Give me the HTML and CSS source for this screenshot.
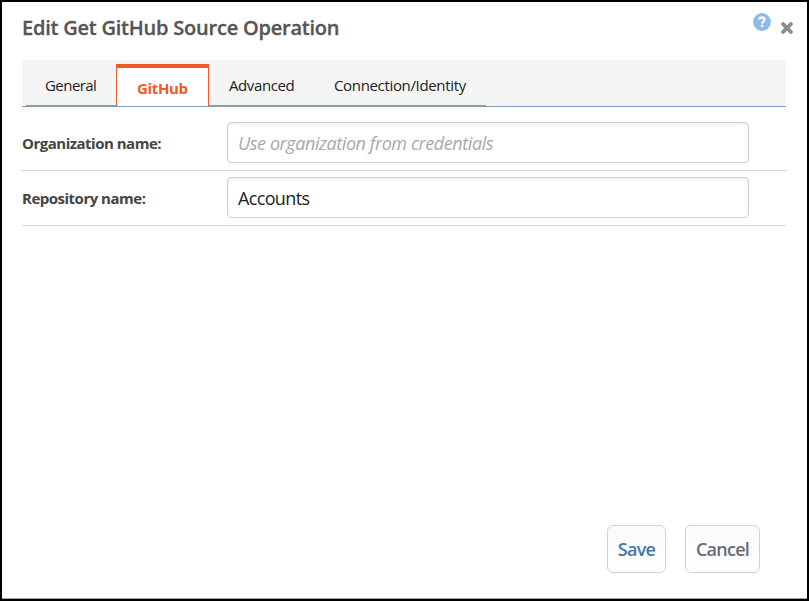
FILE: index.html
```html
<!DOCTYPE html>
<html lang="en">
<head>
<meta charset="utf-8">
<title>Edit Get GitHub Source Operation</title>
<link rel="stylesheet" href="styles.css">
</head>
<body>
<main class="dialog">
  <header class="header">
    <h1 class="title">Edit Get GitHub Source Operation</h1>
    <div class="tools">
      <svg class="help" width="18" height="18" viewBox="0 0 18 18" role="img" aria-label="Help">
        <circle cx="9" cy="9" r="8.9" fill="#8bbce7"/>
        <path d="M6.3 6.6C6.5 3.8 11.6 3.8 11.6 6.5C11.6 8.3 9.1 8.3 9.1 10.6" fill="none" stroke="#fff" stroke-width="2.3"/>
        <rect x="7.9" y="11.7" width="2.4" height="2.2" fill="#fff"/>
      </svg>
      <svg class="close" width="12" height="12" viewBox="0 0 12 12" role="img" aria-label="Close">
        <path d="M2.1 2.1L9.9 9.9M9.9 2.1L2.1 9.9" stroke="#8c8c8c" stroke-width="3.8" stroke-linecap="round"/>
      </svg>
    </div>
  </header>
  <nav class="tabs">
    <div class="tab-list">
      <a class="tab general">General</a>
      <a class="tab active">GitHub</a>
      <a class="tab advanced">Advanced</a>
      <a class="tab connection">Connection/Identity</a>
    </div>
  </nav>
  <form class="form">
    <div class="row">
      <label class="label" for="org">Organization name:</label>
      <input class="field org" id="org" type="text" placeholder="Use organization from credentials">
    </div>
    <div class="row">
      <label class="label" for="repo">Repository name:</label>
      <input class="field repo" id="repo" type="text" value="Accounts">
    </div>
  </form>
  <footer class="footer">
    <button class="button save" type="button">Save</button>
    <button class="button cancel" type="button">Cancel</button>
  </footer>
</main>
</body>
</html>
```
FILE: styles.css
```css
* { box-sizing: border-box; }
body { margin: 0; font-family: "Open Sans", "Noto Sans", sans-serif; background: #fff; }
.dialog {
  display: flex; flex-direction: column;
  width: 809px; height: 601px;
  border: 2px solid #000;
  padding: 0 21px 0 20px;
  box-shadow: inset 0 -1px #a0a0a0;
}
.header { display: flex; justify-content: space-between; height: 58px; }
.title { margin: 12px 0 0; font-size: 20px; line-height: 28px; font-weight: 600; color: #555; letter-spacing: -0.22px; white-space: nowrap; -webkit-text-stroke: 0.3px #555; }
.tools { display: flex; gap: 10px; margin: 11px -7px 0 0; }
.close { margin-top: 9px; }
.tabs { flex: none; height: 47px; background: #f5f5f5; border-bottom: 1px solid #829cb1; padding-left: 4px; }
.tab-list { display: flex; width: 460px; height: 46px; border-bottom: 1px solid #829cb1; }
.tab { display: block; padding-top: 13px; height: 45px; font-size: 15px; line-height: 25px; color: #222; white-space: nowrap; }
.general { width: 90px; padding-left: 19px; letter-spacing: -0.55px; }
.active { width: 93px; height: 42px; margin-top: 4px; padding: 8px 0 0 20px; background: #fff; border: 1px solid #f15a24; border-top-width: 4px; border-bottom: 0; color: #f15a24; font-weight: 700; letter-spacing: -0.35px; }
.advanced { width: 105px; padding-left: 20px; letter-spacing: -0.4px; }
.connection { padding-left: 20px; letter-spacing: -0.34px; }
.form { padding-top: 9px; }
.row { display: flex; height: 55px; padding: 6px 0 7px; border-bottom: 1px solid #d8d8da; }
.label { width: 205px; line-height: 42px; font-size: 15px; font-weight: 700; color: #444; letter-spacing: -0.5px; white-space: nowrap; }
.field { width: 522px; height: 41px; padding: 1px 11px 0 10px; border: 1px solid #cfcfd6; border-radius: 4px; background: #fff; box-shadow: inset 0 2px 3px rgba(0,0,0,.06); font-family: inherit; font-size: 18px; color: #222; outline: none; }
.org { letter-spacing: -0.43px; }
.repo { letter-spacing: -0.65px; }
.field::placeholder { color: #a9a9a9; font-style: italic; opacity: 1; }
.footer { display: flex; gap: 19px; justify-content: flex-end; margin-top: auto; padding: 0 26px 26px 0; }
.button { height: 48px; padding: 0; border: 1px solid #d0d2d4; border-radius: 6px; background: linear-gradient(#f9fafc, #fff); font-family: inherit; font-size: 18px; font-weight: 600; letter-spacing: -0.75px; }
.save { width: 59px; color: #4674a8; }
.cancel { width: 75px; color: #666c75; }
```
